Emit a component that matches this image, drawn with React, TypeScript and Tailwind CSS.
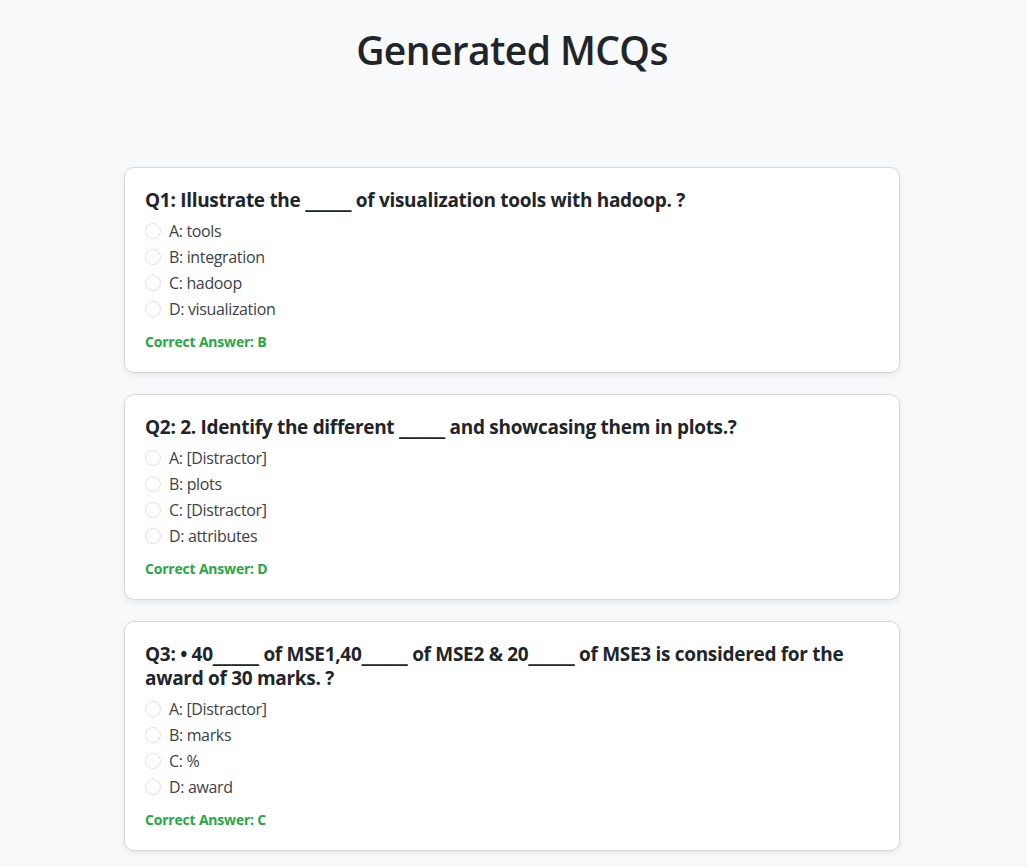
import React from "react";

type Q = { q: React.ReactNode; opts: string[]; ans: string };

const Blank = () => (
  <span style={{ fontFamily: '"DejaVu Sans", sans-serif' }}>_____</span>
);

const questions: Q[] = [
  {
    q: (
      <>
        Q1: Illustrate the <Blank /> of visualization tools with hadoop. ?
      </>
    ),
    opts: ["A: tools", "B: integration", "C: hadoop", "D: visualization"],
    ans: "B",
  },
  {
    q: (
      <>
        Q2: 2. Identify the different <Blank /> and showcasing them in plots.?
      </>
    ),
    opts: ["A: [Distractor]", "B: plots", "C: [Distractor]", "D: attributes"],
    ans: "D",
  },
  {
    q: (
      <>
        Q3: • 40<Blank /> of MSE1,40<Blank /> of MSE2 &amp; 20<Blank /> of MSE3 is considered for the
        <br />
        award of 30 marks. ?
      </>
    ),
    opts: ["A: [Distractor]", "B: marks", "C: %", "D: award"],
    ans: "C",
  },
];

export default function App() {
  return (
    <div
      className="min-h-[867px] bg-[#f8f9fa] text-[#212529]"
      style={{ fontFamily: '"Open Sans", "Noto Sans", sans-serif' }}
    >
      <div className="ml-[124px] w-[776px] pt-[26px]">
        <h1 className="text-center text-[39px] leading-[48px] font-semibold tracking-[-0.6px] mb-[93px] text-[#212529]">
          Generated MCQs
        </h1>
        <div className="flex flex-col gap-[21px]">
          {questions.map((item, i) => (
            <div
              key={i}
              className="bg-white border border-[#d6d8db] rounded-[10px] shadow-[0_2px_6px_rgba(0,0,0,0.08)] px-[20px] pt-[20px] pb-[20px]"
            >
              <h5 className="text-[19px] leading-[24px] font-bold tracking-[-0.3px] text-[#212529] mb-[7px]">
                {item.q}
              </h5>
              <div className="flex flex-col">
                {item.opts.map((o) => (
                  <label
                    key={o}
                    className="flex items-center h-[24px] mb-[2px] text-[16px] tracking-[-0.35px] text-[#3d4247]"
                  >
                    <span className="w-[16px] h-[16px] rounded-full border border-[#dee2e6] bg-white mr-[8px] shrink-0" />
                    <span>{o}</span>
                  </label>
                ))}
              </div>
              <div className="mt-[8px] text-[14px] leading-[21px] font-bold tracking-[-0.2px] text-[#28a745]">
                Correct Answer: {item.ans}
              </div>
            </div>
          ))}
        </div>
      </div>
    </div>
  );
}
